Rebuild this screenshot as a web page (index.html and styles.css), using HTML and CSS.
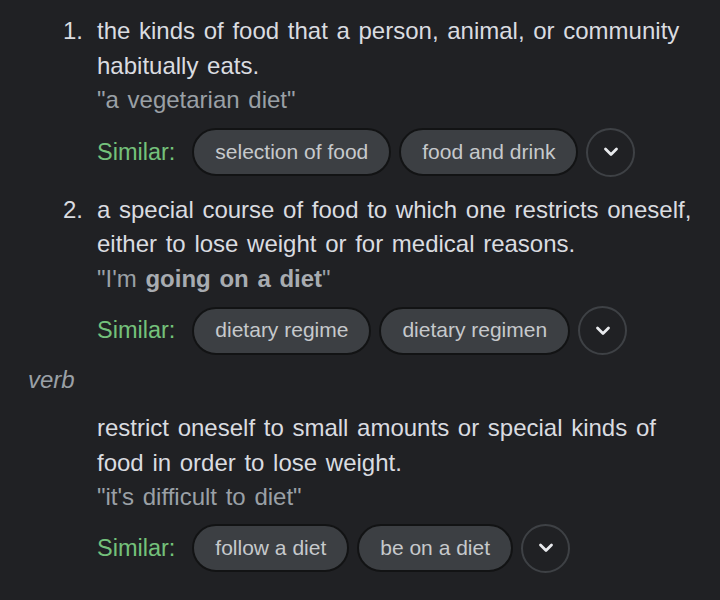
FILE: index.html
```html
<!DOCTYPE html>
<html lang="en">
<head>
<meta charset="utf-8">
<title>diet</title>
<link rel="stylesheet" href="styles.css">
</head>
<body>
<div class="entry">
  <ol class="senses">
    <li class="sense">
      <span class="num">1.</span>
      <div class="body">
        <div class="def">the kinds of food that a person, animal, or community habitually eats.</div>
        <div class="example">"a vegetarian diet"</div>
        <div class="similar">
          <span class="label">Similar:</span>
          <span class="chip">selection of food</span>
          <span class="chip">food and drink</span>
          <span class="more"><svg width="18" height="12" viewBox="0 0 18 12"><path d="M3.5 3 L9 8.5 L14.5 3" fill="none" stroke="#e8eaed" stroke-width="2.8" stroke-linecap="round" stroke-linejoin="round"/></svg></span>
        </div>
      </div>
    </li>
    <li class="sense">
      <span class="num">2.</span>
      <div class="body">
        <div class="def">a special course of food to which one restricts oneself, either to lose weight or for medical reasons.</div>
        <div class="example">"I'm <b>going on a diet</b>"</div>
        <div class="similar">
          <span class="label">Similar:</span>
          <span class="chip">dietary regime</span>
          <span class="chip">dietary regimen</span>
          <span class="more"><svg width="18" height="12" viewBox="0 0 18 12"><path d="M3.5 3 L9 8.5 L14.5 3" fill="none" stroke="#e8eaed" stroke-width="2.8" stroke-linecap="round" stroke-linejoin="round"/></svg></span>
        </div>
      </div>
    </li>
  </ol>
  <div class="pos">verb</div>
  <div class="sense single">
    <span class="num"></span>
    <div class="body">
      <div class="def">restrict oneself to small amounts or special kinds of food in order to lose weight.</div>
      <div class="example">"it's difficult to diet"</div>
      <div class="similar">
        <span class="label">Similar:</span>
        <span class="chip">follow a diet</span>
        <span class="chip">be on a diet</span>
        <span class="more"><svg width="18" height="12" viewBox="0 0 18 12"><path d="M3.5 3 L9 8.5 L14.5 3" fill="none" stroke="#e8eaed" stroke-width="2.8" stroke-linecap="round" stroke-linejoin="round"/></svg></span>
      </div>
    </div>
  </div>
</div>
</body>
</html>
```
FILE: styles.css
```css
html, body {
  margin: 0;
  padding: 0;
  background: #202124;
}
body {
  font-family: "Liberation Sans", Arial, sans-serif;
  color: #dadce0;
  font-size: 24px;
  line-height: 34.5px;
}
.entry {
  padding-top: 14px;
  width: 700px;
}
.senses {
  list-style: none;
  margin: 0;
  padding: 0;
}
.sense {
  display: flex;
  margin-bottom: 16px;
}
.num {
  width: 97px;
  flex: none;
  box-sizing: border-box;
  padding-left: 63px;
}
.body {
  flex: 1;
  word-spacing: 2px;
}
.example {
  color: #9aa0a6;
}
.example b {
  color: #a8acb1;
}
.similar {
  display: flex;
  align-items: center;
  gap: 8px;
  margin-top: 10px;
  word-spacing: 0;
}
.label {
  color: #74c17b;
  font-size: 23.5px;
  margin-right: 9px;
}
.chip {
  box-sizing: border-box;
  height: 48px;
  padding: 0 21px;
  border: 2px solid #121314;
  border-radius: 24px;
  background: #3c3f43;
  color: #c6c9cc;
  font-size: 21px;
  display: flex;
  align-items: center;
}
.more {
  box-sizing: border-box;
  width: 49px;
  height: 49px;
  border: 2px solid #3e4145;
  border-radius: 50%;
  display: flex;
  align-items: center;
  justify-content: center;
}
.more svg {
  display: block;
}
.pos {
  padding-left: 28px;
  font-style: italic;
  color: #9aa0a6;
  line-height: 34px;
  margin-top: -8px;
  margin-bottom: 14px;
}
.single .similar {
  margin-top: 9px;
}
```
